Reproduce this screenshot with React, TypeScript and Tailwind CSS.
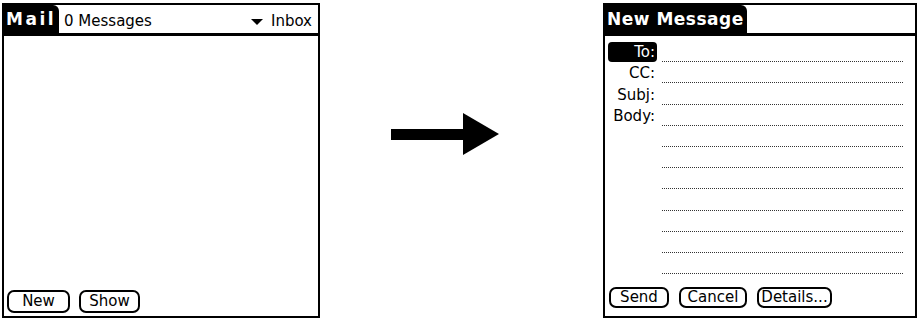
const font = { fontFamily: '"DejaVu Sans", "Liberation Sans", sans-serif' };

function PalmButton({ label, w, h }: { label: string; w: string; h: string }) {
  return (
    <div
      className={`${w} ${h} flex items-center justify-center rounded-[7px] border-2 border-black text-[15px] leading-none text-black`}
    >
      {label}
    </div>
  );
}

function TitleBar({
  title,
  track,
  children,
}: {
  title: string;
  track: string;
  children?: React.ReactNode;
}) {
  return (
    <div className="flex h-[31px] items-stretch border-b-[3px] border-black">
      <div
        className={`flex items-center rounded-tr-[6px] bg-black pl-[2px] pr-[3px] pt-[2px] text-[17px] font-bold text-white ${track}`}
      >
        {title}
      </div>
      {children}
    </div>
  );
}

const fields = ["To:", "CC:", "Subj:", "Body:", "", "", "", "", "", "", ""];

export default function App() {
  return (
    <div className="flex h-[320px] w-[921px] bg-white text-black" style={font}>
      {/* mail list screen */}
      <div className="ml-[2px] mt-[3px] flex h-[315px] w-[318px] flex-col border-2 border-black">
        <TitleBar title="Mail" track="tracking-[2.5px]">
          <div className="flex flex-1 items-center justify-between pl-[5px] pr-[6px] pt-[5px] text-[15px]">
            <span>0 Messages</span>
            <span className="flex items-center gap-[8px]">
              <svg width="12" height="6" viewBox="0 0 12 6">
                <polygon points="0,0 12,0 6,6" fill="black" />
              </svg>
              Inbox
            </span>
          </div>
        </TitleBar>
        <div className="flex-1" />
        <div className="mb-[3px] flex gap-[9px] pl-[3px]">
          <PalmButton label="New" w="w-[63px]" h="h-[23px]" />
          <PalmButton label="Show" w="w-[61px]" h="h-[23px]" />
        </div>
      </div>

      {/* arrow */}
      <div className="flex w-[283px] items-start pl-[71px] pt-[113px]">
        <svg width="108" height="42" viewBox="0 0 108 42">
          <rect x="0" y="16" width="73" height="11" fill="black" />
          <polygon points="72,0 108,21 72,42" fill="black" />
        </svg>
      </div>

      {/* new message screen */}
      <div className="mt-[3px] flex h-[315px] w-[314px] flex-col border-2 border-black">
        <TitleBar title="New Message" track="tracking-[0.5px]" />
        <div className="mt-[5px] flex flex-col pr-[12px]">
          {fields.map((f, i) => (
            <div key={i} className="flex h-[21.2px] items-end">
              <div className="flex w-[52px] justify-end pl-[2px]">
                {i === 0 ? (
                  <div className="flex h-[20px] w-[49px] items-center justify-end rounded-[4px] bg-black pr-[2px] pt-[1px] text-[15px] leading-none text-white">
                    {f}
                  </div>
                ) : (
                  <div className="pb-[2px] pr-[2px] text-[15px] leading-none">{f}</div>
                )}
              </div>
              <div className="ml-[5px] flex-1 border-b border-dotted border-[#333]" />
            </div>
          ))}
        </div>
        <div className="flex-1" />
        <div className="mb-[8px] flex gap-[10px] pl-[4px]">
          <PalmButton label="Send" w="w-[60px]" h="h-[21px]" />
          <PalmButton label="Cancel" w="w-[68px]" h="h-[21px]" />
          <PalmButton label="Details..." w="w-[75px]" h="h-[21px]" />
        </div>
      </div>
    </div>
  );
}
